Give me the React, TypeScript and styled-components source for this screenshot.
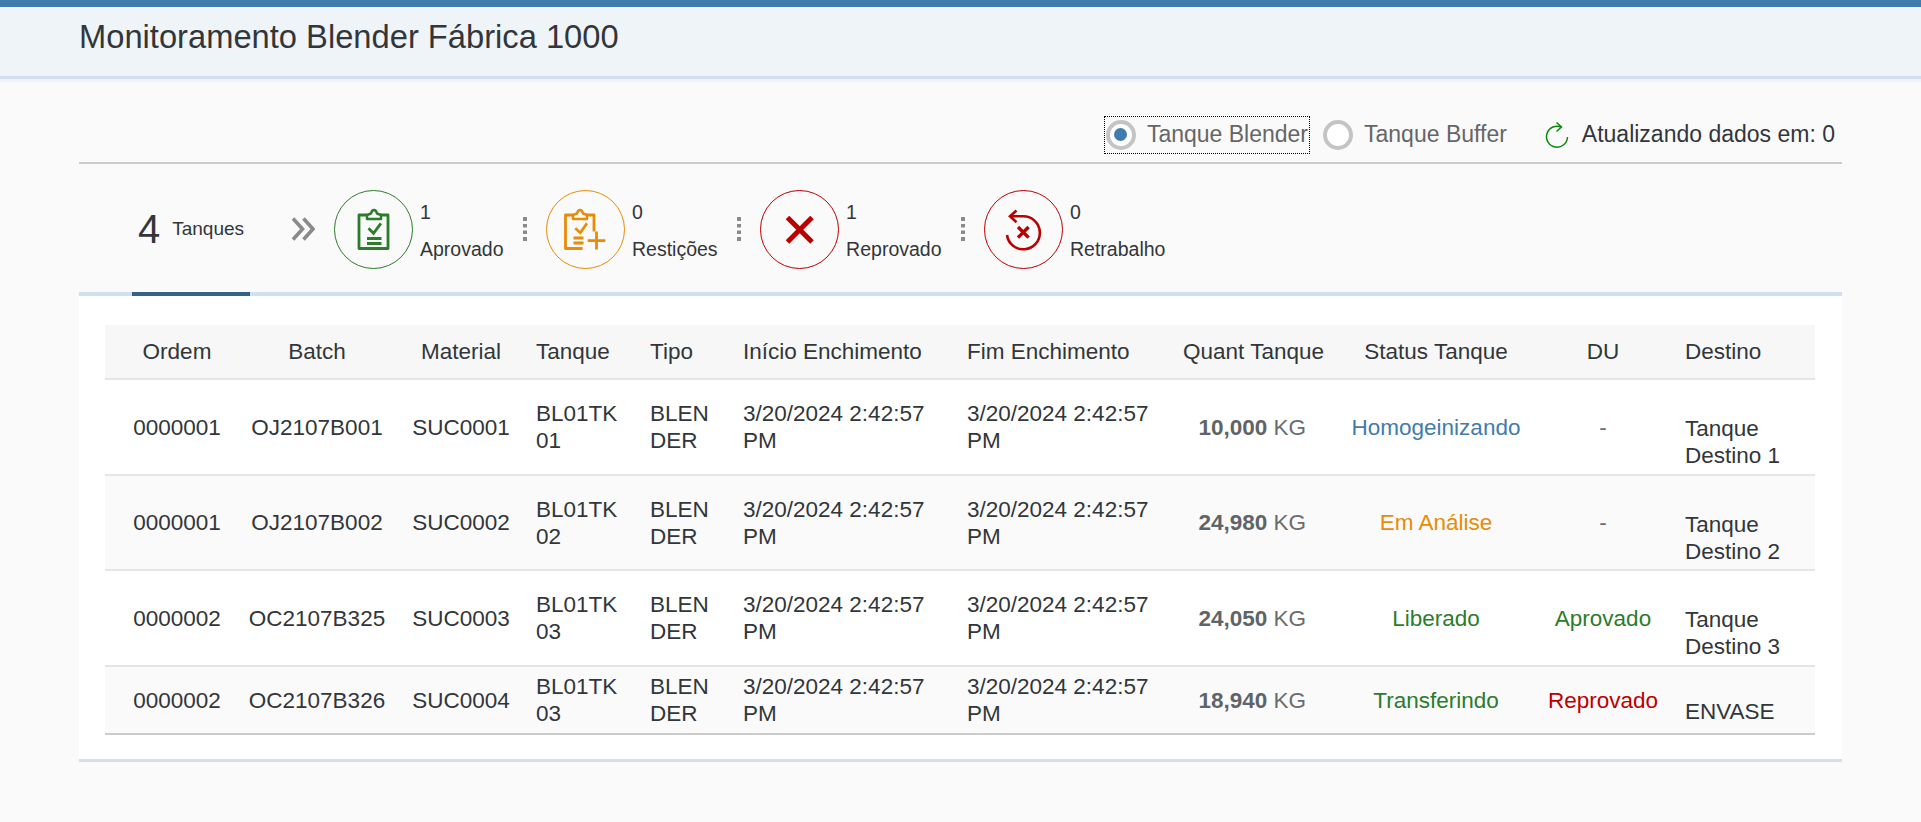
import React from 'react';
import styled, { createGlobalStyle } from 'styled-components';

const GlobalStyle = createGlobalStyle`
  html, body { margin: 0; padding: 0; background: #fafafa; }
  body { font-family: "Liberation Sans", Arial, sans-serif; color: #32363a; }
`;

type Col = { w: number; align: 'left' | 'center' | 'right'; pl?: number; pr?: number; label: string; headAlign?: 'left' | 'center' };

const columns: Col[] = [
  { w: 140, align: 'center', pl: 4, pr: 0, label: 'Ordem' },
  { w: 144, align: 'center', pl: 0, pr: 0, label: 'Batch' },
  { w: 139, align: 'center', pl: 5, pr: 0, label: 'Material' },
  { w: 114, align: 'left', label: 'Tanque' },
  { w: 93, align: 'left', label: 'Tipo' },
  { w: 224, align: 'left', label: 'Início Enchimento' },
  { w: 216, align: 'left', label: 'Fim Enchimento' },
  { w: 157, align: 'right', pr: 26, label: 'Quant Tanque', headAlign: 'center' },
  { w: 208, align: 'center', label: 'Status Tanque' },
  { w: 126, align: 'center', label: 'DU' },
  { w: 149, align: 'left', pl: 19, label: 'Destino' }
];

const rows = [
  { h: 96, top: 30, ordem: '0000001', batch: 'OJ2107B001', material: 'SUC0001', tanque: 'BL01TK01', qty: '10,000', status: 'Homogeinizando', sc: '#427cac', du: '-', dc: '#6a6d70', destino: 'Tanque Destino 1' },
  { h: 95, top: 30, ordem: '0000001', batch: 'OJ2107B002', material: 'SUC0002', tanque: 'BL01TK02', qty: '24,980', status: 'Em Análise', sc: '#e78c07', du: '-', dc: '#6a6d70', destino: 'Tanque Destino 2' },
  { h: 96, top: 30, ordem: '0000002', batch: 'OC2107B325', material: 'SUC0003', tanque: 'BL01TK03', qty: '24,050', status: 'Liberado', sc: '#2b7d2b', du: 'Aprovado', dc: '#2b7d2b', destino: 'Tanque Destino 3' },
  { h: 68, top: 22, ordem: '0000002', batch: 'OC2107B326', material: 'SUC0004', tanque: 'BL01TK03', qty: '18,940', status: 'Transferindo', sc: '#2b7d2b', du: 'Reprovado', dc: '#bb0000', destino: 'ENVASE' }
];

const ApprovedIcon = () => (
  <svg width="79" height="79" viewBox="0 0 79 79" fill="none" stroke="#2b7d2b">
    <path d="M33 25h-8v33.500h29V25h-8" strokeWidth="2.800" strokeLinejoin="round" />
    <path d="M33 29v-4l4-1.500c.5-2 1.500-3.500 3-3.500s2.500 1.500 3 3.500l4 1.500v4z" strokeWidth="2.500" strokeLinejoin="round" />
    <path d="M34.500 38.300l5 5 7.400-10" strokeWidth="2.800" />
    <path d="M33 48.500h14.500M33 53.500h14.500" strokeWidth="3" />
  </svg>
);

const RestrictionIcon = () => (
  <svg width="79" height="79" viewBox="0 0 79 79" fill="none" stroke="#e78c07">
    <path d="M27 25h-7.500v33.500h17M40 25h8v16.500" strokeWidth="2.800" strokeLinejoin="round" />
    <path d="M27 29v-4l4-1.500c.5-2 1.500-3.500 3-3.500s2.500 1.500 3 3.500l4 1.500v4z" strokeWidth="2.500" strokeLinejoin="round" />
    <path d="M29.300 38.300l5 4.400 6.700-9.400" strokeWidth="2.800" />
    <path d="M27.500 48h10M27.500 53h10" strokeWidth="3" />
    <path d="M41.700 50.700h17.600M50.500 41.500v18" strokeWidth="2.800" />
  </svg>
);

const RejectedIcon = () => (
  <svg width="79" height="79" viewBox="0 0 79 79" fill="none" stroke="#bb0000">
    <path d="M27.500 27.500l24.500 24.500M52 27.500L27.500 52" strokeWidth="5" />
  </svg>
);

const ReworkIcon = () => (
  <svg width="79" height="79" viewBox="0 0 79 79" fill="none" stroke="#bb0000">
    <path d="M26 26.300h13.300A16.500 16.500 0 1 1 23 45" strokeWidth="2.600" />
    <path d="M32.500 20.500l-6.500 5.800 6.500 6" strokeWidth="2.600" />
    <path d="M34 37l10.600 10.600M44.600 37L34 47.600" strokeWidth="3.400" />
  </svg>
);

const summary = [
  { n: 1, label: 'Aprovado', color: '#2b7d2b', icon: <ApprovedIcon /> },
  { n: 0, label: 'Restições', color: '#e78c07', icon: <RestrictionIcon /> },
  { n: 1, label: 'Reprovado', color: '#bb0000', icon: <RejectedIcon /> },
  { n: 0, label: 'Retrabalho', color: '#bb0000', icon: <ReworkIcon /> }
];

export default function App() {
  return (
    <>
      <GlobalStyle />
      <Page>
        <TopStripe />
        <Header>
          <Title>Monitoramento Blender Fábrica 1000</Title>
        </Header>
        <Content>
          <Toolbar>
            <RadioFocus>
              <RadioRing $checked />
              <RadioLabel>Tanque Blender</RadioLabel>
            </RadioFocus>
            <RadioItem>
              <RadioRing />
              <RadioLabel>Tanque Buffer</RadioLabel>
            </RadioItem>
            <Refresh>
              <svg width="26" height="28" viewBox="0 0 26 28" fill="none" stroke="#0a8a0a" strokeWidth="1.5">
                <path d="M17 6A10.500 10.500 0 1 0 23.500 16" />
                <path d="M12.500 1.500L17.500 6l-5 4.500" />
              </svg>
              <RefreshText>Atualizando dados em: 0</RefreshText>
            </Refresh>
          </Toolbar>

          <TabBar>
            <TotalTab>
              <TotalNumber>4</TotalNumber>
              <TotalLabel>Tanques</TotalLabel>
            </TotalTab>
            <Arrows width="24" height="24" viewBox="0 0 24 24" fill="none" stroke="#8a8a8a" strokeWidth="3.600">
              <path d="M2 1.500L11.500 12 2 22.500M12.500 1.500L22 12l-9.500 10.500" />
            </Arrows>
            {summary.map((item, i) => (
              <React.Fragment key={item.label}>
                <SummaryItem>
                  <IconCircle $color={item.color}>{item.icon}</IconCircle>
                  <SummaryText>
                    <SummaryNumber>{item.n}</SummaryNumber>
                    <SummaryLabel>{item.label}</SummaryLabel>
                  </SummaryText>
                </SummaryItem>
                {i < summary.length - 1 && (
                  <Dots width="6" height="24" viewBox="0 0 6 24" fill="#8a8a8a">
                    <rect x="1" y="0" width="4" height="4" />
                    <rect x="1" y="7" width="4" height="3.500" />
                    <rect x="1" y="13.500" width="4" height="3.500" />
                    <rect x="1" y="20" width="4" height="4" />
                  </Dots>
                )}
              </React.Fragment>
            ))}
          </TabBar>

          <Panel>
            <Table>
              <colgroup>
                {columns.map(c => (
                  <ColDef key={c.label} $w={c.w} />
                ))}
              </colgroup>
              <thead>
                <tr>
                  {columns.map(c => (
                    <Th key={c.label} $align={c.headAlign || c.align} $pl={c.pl} $pr={c.headAlign ? 8 : c.pr}>
                      {c.label}
                    </Th>
                  ))}
                </tr>
              </thead>
              <tbody>
                {rows.map((r, i) => (
                  <Row key={r.batch} $h={r.h} $odd={i % 2 === 1} $last={i === rows.length - 1}>
                    <Td $align="center" $pl={4} $pr={0}>{r.ordem}</Td>
                    <Td $align="center" $pl={0} $pr={0}>{r.batch}</Td>
                    <Td $align="center" $pl={5} $pr={0}>{r.material}</Td>
                    <Td $align="left" $pr={16} $break>{r.tanque}</Td>
                    <Td $align="left" $pr={20} $break>BLENDER</Td>
                    <Td $align="left">3/20/2024 2:42:57 PM</Td>
                    <Td $align="left">3/20/2024 2:42:57 PM</Td>
                    <Td $align="right" $pr={26}>
                      <Qty>{r.qty}</Qty> <Unit>KG</Unit>
                    </Td>
                    <Td $align="center" $color={r.sc}>{r.status}</Td>
                    <Td $align="center" $color={r.dc}>{r.du}</Td>
                    <DestinoCell $align="left" $pl={19} $top={r.top}>{r.destino}</DestinoCell>
                  </Row>
                ))}
              </tbody>
            </Table>
          </Panel>
        </Content>
      </Page>
    </>
  );
}

// estilos
const Page = styled.div`
  min-height: 822px;
  background: #fafafa;
  overflow: hidden;
`;

const TopStripe = styled.div`
  height: 7px;
  background: #427cac;
`;

const Header = styled.header`
  height: 69px;
  padding-left: 79px;
  background: #eff4f9;
  border-bottom: 3px solid #d1e0f0;
  box-shadow: 0 3px 0 #eff4f9;
  display: flex;
  align-items: center;
`;

const Title = styled.h1`
  margin: 0 0 10px;
  font-size: 32.7px;
  font-weight: 400;
  color: #32363a;
`;

const Content = styled.main`
  margin: 0 79px;
`;

const Toolbar = styled.div`
  height: 85px;
  box-sizing: border-box;
  border-bottom: 2px solid #cccccc;
  display: flex;
  align-items: center;
  justify-content: flex-end;
  padding: 28px 7px 0 0;
`;

const RadioItem = styled.div`
  display: flex;
  align-items: center;
  gap: 11px;
  height: 36px;
  margin-left: 13px;
`;

const RadioFocus = styled(RadioItem)`
  margin-left: 0;
  padding: 0 1px;
  border: 1px dotted #000000;
`;

const RadioRing = styled.span<{ $checked?: boolean }>`
  width: 30px;
  height: 30px;
  box-sizing: border-box;
  border-radius: 50%;
  border: 4px solid #c4c4c4;
  background: #ffffff;
  display: flex;
  align-items: center;
  justify-content: center;

  &::after {
    content: '';
    display: ${props => (props.$checked ? 'block' : 'none')};
    width: 13px;
    height: 13px;
    border-radius: 50%;
    background: #427cac;
  }
`;

const RadioLabel = styled.span`
  font-size: 23px;
  color: #666666;
`;

const Refresh = styled.div`
  display: flex;
  align-items: center;
  gap: 12px;
  margin-left: 37px;
`;

const RefreshText = styled.span`
  font-size: 23px;
  color: #32363a;
`;

const TabBar = styled.div`
  height: 132px;
  box-sizing: border-box;
  padding-top: 2px;
  border-bottom: 4px solid #d1e0f0;
  display: flex;
  align-items: center;
  position: relative;
`;

const TotalTab = styled.div`
  width: 118px;
  height: 130px;
  margin-left: 53px;
  box-sizing: border-box;
  border-bottom: 4px solid #346187;
  margin-bottom: -4px;
  display: flex;
  align-items: center;
  justify-content: center;
  gap: 12px;
`;

const TotalNumber = styled.span`
  font-size: 40px;
  color: #32363a;
`;

const TotalLabel = styled.span`
  font-size: 19px;
  color: #32363a;
`;

const Arrows = styled.svg`
  margin-left: 41px;
  margin-right: 19px;
  flex: none;
`;

const SummaryItem = styled.div`
  display: flex;
  align-items: center;
  gap: 7px;
`;

const IconCircle = styled.div<{ $color: string }>`
  width: 79px;
  height: 79px;
  box-sizing: border-box;
  border-radius: 50%;
  border: 1px solid ${props => props.$color};
  flex: none;
  display: flex;
  align-items: center;
  justify-content: center;

  svg {
    flex: none;
  }
`;

const SummaryText = styled.div`
  display: flex;
  flex-direction: column;
  gap: 11px;
  padding-top: 2px;
  font-size: 19.5px;
  line-height: 26px;
  color: #32363a;
`;

const SummaryNumber = styled.span``;

const SummaryLabel = styled.span``;

const Dots = styled.svg`
  margin: 0 18px 0 18.500px;
  flex: none;
`;

const Panel = styled.section`
  background: #ffffff;
  padding: 29px 27px 27px 26px;
  border-bottom: 3px solid #d1e0f0;
  height: 466px;
  box-sizing: border-box;
`;

const Table = styled.table`
  width: 1710px;
  table-layout: fixed;
  border-collapse: collapse;
  font-size: 22.5px;
  line-height: 27px;
`;

const ColDef = styled.col<{ $w: number }>`
  width: ${props => props.$w}px;
`;

const Th = styled.th<{ $align: string; $pl?: number; $pr?: number }>`
  height: 53px;
  padding: 0 ${props => props.$pr ?? 8}px 0 ${props => props.$pl ?? 8}px;
  background: #f7f7f7;
  border-bottom: 2px solid #e5e5e5;
  text-align: ${props => props.$align};
  font-weight: 400;
  color: #32363a;
  white-space: nowrap;
`;

const Row = styled.tr<{ $h: number; $odd: boolean; $last: boolean }>`
  height: ${props => props.$h}px;
  background: ${props => (props.$odd ? '#fafafa' : '#ffffff')};
  border-bottom: 2px solid ${props => (props.$last ? '#cccccc' : '#e5e5e5')};
`;

const Td = styled.td<{ $align: string; $pl?: number; $pr?: number; $color?: string; $break?: boolean }>`
  padding: 0 ${props => props.$pr ?? 8}px 0 ${props => props.$pl ?? 8}px;
  text-align: ${props => props.$align};
  color: ${props => props.$color || '#32363a'};
  vertical-align: middle;
  word-break: ${props => (props.$break ? 'break-all' : 'normal')};
`;

const DestinoCell = styled(Td)<{ $top: number }>`
  padding-top: ${props => props.$top}px;
`;

const Qty = styled.span`
  font-weight: 700;
  color: #5f6468;
`;

const Unit = styled.span`
  color: #6a6d70;
`;
